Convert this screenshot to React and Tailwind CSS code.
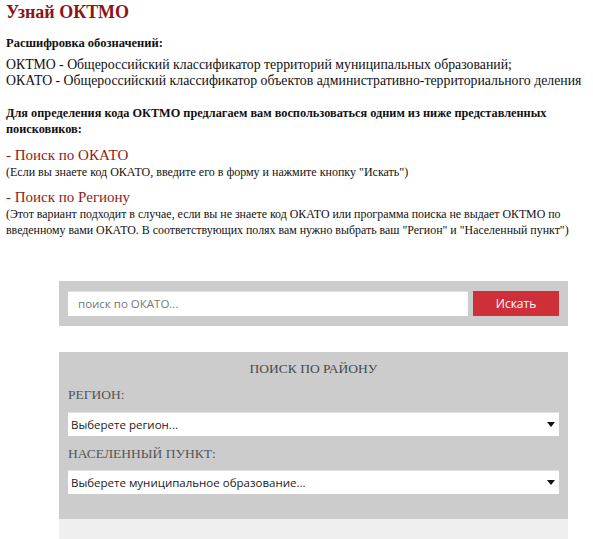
const serif = { fontFamily: '"Liberation Serif", "Times New Roman", serif' };

function Select({ label }) {
  return (
    <div className="relative h-[24px] bg-white border-t border-[#e2e2e2] flex items-center">
      <span className="pl-[3px] text-[11.5px] text-[#1a1a1a] font-['Open_Sans',sans-serif]">{label}</span>
      <svg className="absolute right-[4px] top-[9px]" width="8" height="5" viewBox="0 0 8 5">
        <path d="M0 0h8L4 5z" fill="#111" />
      </svg>
    </div>
  );
}

export default function App() {
  return (
    <div className="w-[593px] h-[539px] bg-white overflow-hidden text-[#111]" style={serif}>
      {/* Text block */}
      <div className="px-[6px] pt-[1px] whitespace-nowrap">
        <h1 className="text-[18px] font-bold text-[#8c1515] leading-[22px]">Узнай ОКТМО</h1>

        <p className="mt-[12px] text-[12.5px] font-bold leading-[16px]">Расшифровка обозначений:</p>
        <p className="mt-[6px] text-[13.8px] leading-[16px]">
          ОКТМО - Общероссийский классификатор территорий муниципальных образований;
          <br />
          ОКАТО - Общероссийский классификатор объектов административно-территориального деления
        </p>

        <p className="mt-[16px] text-[12.3px] font-bold leading-[16px]">
          Для определения кода ОКТМО предлагаем вам воспользоваться одним из ниже представленных
          <br />
          поисковиков:
        </p>

        <p className="mt-[10px] text-[15px] text-[#8c1c1c] leading-[16px]">- Поиск по ОКАТО</p>
        <p className="mt-[1px] text-[12px] leading-[16px]">(Если вы знаете код ОКАТО, введите его в форму и нажмите кнопку "Искать")</p>

        <p className="mt-[9px] text-[15px] text-[#8c1c1c] leading-[16px]">- Поиск по Региону</p>
        <p className="mt-[1px] text-[11.9px] leading-[16px]">
          (Этот вариант подходит в случае, если вы не знаете код ОКАТО или программа поиска не выдает ОКТМО по
          <br />
          введенному вами ОКАТО. В соответствующих полях вам нужно выбрать ваш "Регион" и "Населенный пункт")
        </p>
      </div>

      {/* OKATO search */}
      <div className="mt-[43px] ml-[59px] w-[509px] bg-[#cccccc] px-[9px] py-[10px] flex gap-[5px]">
        <div className="flex-1 h-[25px] bg-white border-t border-[#e0e0e0] flex items-center pl-[10px]">
          <span className="text-[11.5px] text-[#777] font-['Open_Sans',sans-serif]">поиск по ОКАТО...</span>
        </div>
        <button className="w-[86px] h-[25px] bg-[#cf2f38] text-white text-[12px] font-['Open_Sans',sans-serif]">
          Искать
        </button>
      </div>

      {/* Region search */}
      <div className="mt-[26px] ml-[59px] w-[509px] bg-[#cccccc] px-[9px] pt-[8px] pb-[25px]">
        <div className="text-center text-[13.5px] text-[#4a4a4a] leading-[18px]">ПОИСК ПО РАЙОНУ</div>
        <div className="mt-[8px] text-[13.5px] text-[#555] leading-[18px]">РЕГИОН:</div>
        <div className="mt-[8px]">
          <Select label="Выберете регион..." />
        </div>
        <div className="mt-[9px] text-[13.5px] text-[#555] leading-[18px]">НАСЕЛЕННЫЙ ПУНКТ:</div>
        <div className="mt-[7px]">
          <Select label="Выберете муниципальное образование..." />
        </div>
      </div>
      <div className="ml-[59px] w-[509px] h-[40px] bg-[#efefef]" />
    </div>
  );
}
